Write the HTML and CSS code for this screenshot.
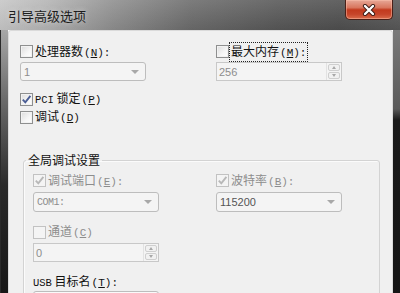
FILE: index.html
```html
<!DOCTYPE html>
<html>
<head>
<meta charset="utf-8">
<link rel="stylesheet" href="styles.css">
</head>
<body>
<div class="window">
  <div class="titlebar">
    <div class="title">引导高级选项</div>
    <div class="close">
      <svg width="14" height="12" viewBox="0 0 14 12"><path d="M3 2 L11 10 M11 2 L3 10" stroke="#3a1a14" stroke-width="4.2" stroke-linecap="round"/><path d="M3 2 L11 10 M11 2 L3 10" stroke="#fff" stroke-width="2.4" stroke-linecap="round"/></svg>
    </div>
  </div>
  <div class="frame-body">
    <div class="frame-left"></div>
    <div class="client">
      <div class="pair row-labels">
        <div class="cb"><span class="box"></span><span class="txt">处理器数<span class="mn">(<u>N</u>):</span></span></div>
        <div class="cb"><span class="box"></span><span class="txt focus">最大内存<span class="mn">(<u>M</u>):</span></span></div>
      </div>
      <div class="pair row-fields">
        <div class="combo"><span class="val">1</span><span class="arrow"></span></div>
        <div class="spin"><span class="val">256</span><span class="spin-btns"><span class="sb up"></span><span class="sb down"></span></span></div>
      </div>
      <div class="cb row-pci"><span class="box checked"><svg width="11" height="11" viewBox="0 0 11 11"><path d="M1.8 5.6 L4.3 8.3 L9.4 1.8" fill="none" stroke="#4b5e95" stroke-width="1.9"/></svg></span><span class="txt"><span class="lat">PCI</span> 锁定<span class="mn">(<u>P</u>)</span></span></div>
      <div class="cb row-debug"><span class="box"></span><span class="txt">调试<span class="mn">(<u>D</u>)</span></span></div>
      <fieldset class="group">
        <legend>全局调试设置</legend>
        <div class="pair g-labels">
          <div class="cb dis"><span class="box checked"><svg width="11" height="11" viewBox="0 0 11 11"><path d="M1.8 5.6 L4.3 8.3 L9.4 1.8" fill="none" stroke="#b8b8b8" stroke-width="1.9"/></svg></span><span class="txt">调试端口<span class="mn">(<u>E</u>):</span></span></div>
          <div class="cb dis"><span class="box checked"><svg width="11" height="11" viewBox="0 0 11 11"><path d="M1.8 5.6 L4.3 8.3 L9.4 1.8" fill="none" stroke="#b8b8b8" stroke-width="1.9"/></svg></span><span class="txt">波特率<span class="mn">(<u>B</u>):</span></span></div>
        </div>
        <div class="pair g-fields">
          <div class="combo"><span class="val mono">COM1:</span><span class="arrow"></span></div>
          <div class="combo"><span class="val dark">115200</span><span class="arrow"></span></div>
        </div>
        <div class="cb dis g-chan"><span class="box"></span><span class="txt">通道<span class="mn">(<u>C</u>)</span></span></div>
        <div class="spin g-spin"><span class="val">0</span><span class="spin-btns"><span class="sb up"></span><span class="sb down"></span></span></div>
        <div class="cb g-usb"><span class="txt"><span class="lat">USB</span> 目标名<span class="mn">(<u>T</u>):</span></span></div>
        <div class="textbox"></div>
      </fieldset>
    </div>
    <div class="frame-right"></div>
  </div>
</div>
</body>
</html>
```
FILE: styles.css
```css
html, body { margin: 0; padding: 0; }
body { width: 400px; height: 293px; overflow: hidden; }

.window {
  width: 400px;
  height: 293px;
  overflow: hidden;
  display: flex;
  flex-direction: column;
  font-family: "Noto Sans CJK SC", sans-serif;
  font-size: 12px;
  color: #111;
}

.titlebar {
  height: 30px;
  flex: none;
  display: flex;
  justify-content: space-between;
  align-items: flex-start;
  background:
    linear-gradient(to bottom, rgba(255,255,255,0.12), rgba(0,0,0,0.05)),
    linear-gradient(to right, #c6c6c6 0%, #b3b3b3 12%, #8e8e8e 28%, #6a6a6a 48%, #565656 70%, #4e4e4e 85%, #575757 100%);
}

.title {
  margin: 7px 0 0 8px;
  font-size: 13px;
  line-height: 18px;
  color: #1c1c1c;
  text-shadow: 0 0 5px rgba(235,235,235,0.7);
}

.close {
  margin-right: 7px;
  width: 48px;
  height: 20px;
  box-sizing: border-box;
  border: 1px solid #4a2018;
  border-top: none;
  border-radius: 0 0 5px 5px;
  background: linear-gradient(to bottom, #e7a897 0%, #d8765e 40%, #c23a1e 52%, #c6452a 75%, #d96c4c 100%);
  box-shadow: inset 0 0 0 1px rgba(255,200,180,0.45);
  display: flex;
  align-items: center;
  justify-content: center;
}

.frame-body {
  flex: 1;
  display: flex;
}

.frame-left {
  width: 8px;
  flex: none;
  background: linear-gradient(to right, #2a2a2a 0, #2a2a2a 1px, transparent 1px),
              linear-gradient(to bottom, #a7a7a7 0%, #6a6a6a 25%, #2a2a2a 55%, #141414 100%);
}

.frame-right {
  width: 7px;
  flex: none;
  background: linear-gradient(to bottom, #7a7a7a 0%, #5a5a5a 28%, #1a1a1a 32%, #151515 100%);
}

.client {
  flex: 1;
  background: #f0f0f0;
  border: 1px solid #dadada;
  border-bottom: none;
  border-radius: 3px 3px 0 0;
  padding: 12px 11px 0 11px;
  box-sizing: border-box;
}

.pair {
  display: grid;
  grid-template-columns: 126px 126px;
  column-gap: 70px;
}

.cb {
  display: flex;
  align-items: center;
  height: 14px;
  line-height: 14px;
  white-space: nowrap;
}

.box {
  width: 13px;
  height: 13px;
  flex: none;
  box-sizing: border-box;
  border: 1px solid #8e8f8f;
  background: linear-gradient(135deg, #dcdcdc 0%, #f6f6f6 60%, #ffffff 100%);
  box-shadow: inset 0 0 0 1px #f2f2f2;
  margin-right: 2px;
  display: flex;
  align-items: center;
  justify-content: center;
}

.dis .box {
  border-color: #c2c2c2;
  background: #f4f4f4;
  box-shadow: none;
}

.dis .txt { color: #8d8d8d; }

.mn {
  font-family: "Liberation Mono", monospace;
  font-size: 11px;
  margin-left: 1px;
}

.lat {
  font-family: "Liberation Mono", monospace;
  font-size: 10.5px;
}

.focus {
  outline: 1px dotted #222;
  outline-offset: 1px;
}

.row-labels { height: 17px; align-items: center; }
.row-labels .cb { height: 17px; }

.row-fields { margin-top: 2px; }

.combo {
  height: 19px;
  box-sizing: border-box;
  border: 1px solid #bdbdbd;
  border-radius: 3px;
  background: #f4f4f4;
  display: flex;
  align-items: center;
  justify-content: space-between;
  padding: 0 6px 0 3px;
}

.val {
  font-family: "Liberation Sans", sans-serif;
  font-size: 11px;
  color: #8d8d8d;
}

.val.dark { color: #555; }

.val.mono {
  font-family: "Liberation Mono", monospace;
  font-size: 10px;
  letter-spacing: -0.5px;
}

.arrow {
  width: 0;
  height: 0;
  border-left: 4px solid transparent;
  border-right: 4px solid transparent;
  border-top: 4px solid #a8a8a8;
}

.spin {
  height: 19px;
  box-sizing: border-box;
  border: 1px solid #c8c8c8;
  background: #f4f4f4;
  display: flex;
  align-items: center;
  justify-content: space-between;
  padding: 0 0 0 2px;
}

.spin-btns {
  width: 15px;
  height: 17px;
  display: flex;
  flex-direction: column;
  border-left: 1px solid #e2e2e2;
  box-sizing: border-box;
  padding: 1px;
  gap: 1px;
}

.sb {
  flex: 1;
  border: 1px solid #cfcfcf;
  border-radius: 2px;
  background: #f1f1f1;
  display: flex;
  align-items: center;
  justify-content: center;
}

.sb::after {
  content: "";
  width: 0;
  height: 0;
  border-left: 2.5px solid transparent;
  border-right: 2.5px solid transparent;
}

.sb.up::after { border-bottom: 3px solid #a8a8a8; }
.sb.down::after { border-top: 3px solid #a8a8a8; }

.row-pci { margin-top: 11px; }
.row-debug { margin-top: 4px; }

.group {
  margin: 28px 1px 0 3px;
  padding: 5px 9px 0 9px;
  border: 1px solid #d3d3d3;
  border-radius: 3px;
  box-shadow: inset 1px 1px 0 #fbfbfb;
  min-width: 0;
}

.group legend {
  padding: 0 2px;
  margin-left: -7px;
  height: 16px;
  line-height: 16px;
  color: #111;
}

.g-labels { column-gap: 57px; height: 15px; }
.g-labels .cb { height: 15px; }

.g-fields { column-gap: 57px; margin-top: 4px; }
.g-fields .combo { height: 20px; }

.g-chan { margin-top: 13px; }

.g-spin { width: 126px; margin-top: 4px; }

.g-usb { margin-top: 13px; }

.textbox {
  width: 126px;
  height: 20px;
  margin-top: 2px;
  box-sizing: border-box;
  border: 1px solid #bdbdbd;
  border-radius: 3px;
  background: #fafafa;
}
```
